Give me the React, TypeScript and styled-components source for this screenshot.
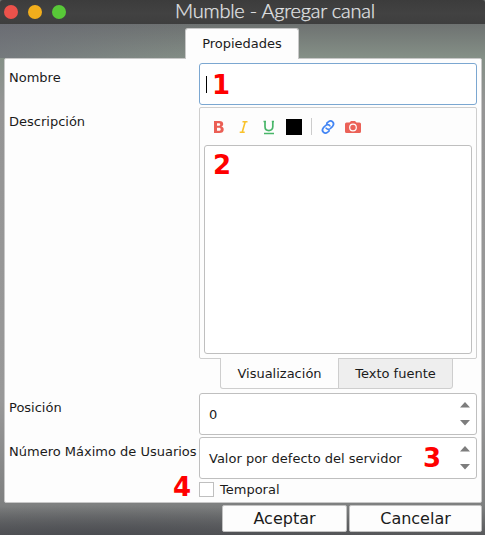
import React from "react";
import styled, { createGlobalStyle } from "styled-components";

const Global = createGlobalStyle`
  *{box-sizing:border-box}
  body{margin:0;overflow:hidden}
`;
const Window = styled.div`
  width:485px;height:535px;display:flex;flex-direction:column;
  font:13px/16px "DejaVu Sans",sans-serif;color:#1b1b1b;
  background:
    linear-gradient(90deg,rgba(104,104,117,.55),transparent 45%) 0 24px / 100% 34px no-repeat,
    radial-gradient(ellipse at 20% 100%,rgba(68,70,76,.65),transparent 65%) 0 503px / 100% 32px no-repeat,
    linear-gradient(#6e7271 24px,#859087 58px,#959595 105px,#999 400px,#828383 490px,#7e8080 505px,#58595b 535px);
`;
const TitleBar = styled.header`
  height:24px;flex:none;display:grid;grid-template-columns:175px 1fr;align-items:center;
  background:linear-gradient(#3c3c3c,#424242 55%,#3e3e3e);border-radius:3px 3px 0 0;
`;
const Lights = styled.div`display:flex;gap:10px;padding-left:4px;`;
const Light = styled.span<{ $color: string }>`
  width:14px;height:14px;border-radius:50%;background:${p => p.$color};
`;
const Title = styled.h1`
  margin:0;align-self:start;font:300 20px/20px Lato,sans-serif;letter-spacing:-.23px;
  color:#e4e6e8;-webkit-text-stroke:.25px #e4e6e8;white-space:nowrap;
`;
const TopTab = styled.div`
  flex:none;width:114px;height:31px;margin:4px 0 -1px 185px;z-index:1;
  display:flex;justify-content:center;padding-top:7px;
  background:#fdfdfd;border:1px solid #c8c8c8;border-bottom:0;border-radius:3px 3px 0 0;
`;
const Panel = styled.main`
  flex:none;width:478px;height:445px;margin-left:4px;padding:4px 4px 0;
  display:grid;grid-template-columns:190px 278px;grid-template-rows:42px 284px 42px 42px 16px;
  row-gap:2px;align-content:start;background:#fdfdfd;border:1px solid #c8c8c8;border-radius:2px;
`;
const Label = styled.label`padding:7px 0 0 0;white-space:nowrap;`;
const Field = styled.div<{ $focus?: boolean }>`
  position:relative;height:42px;display:flex;align-items:center;padding:1px 5px 0 9px;
  border:1px solid ${p => (p.$focus ? "#7ba7d1" : "#bfbfbf")};border-radius:3px;background:#fff;
`;
const Caret = styled.span`width:1px;height:17px;margin-left:-3px;background:#000;`;
const Mark = styled.b<{ $x: number; $y: number }>`
  position:absolute;left:${p => p.$x}px;top:${p => p.$y}px;font-size:26px;line-height:30px;color:#f00;
`;
const Editor = styled.section`
  height:252px;padding:0 4px 4px;display:flex;flex-direction:column;
  border:1px solid #cecece;border-radius:2px;
`;
const Toolbar = styled.div`height:37px;flex:none;display:flex;align-items:center;padding:0 0 0 5px;`;
const Tool = styled.span`width:25px;height:20px;flex:none;display:block;svg{display:block}`;
const Divider = styled.span`width:1px;height:17px;margin:0 6px 0 2px;background:#ccc;`;
const Text = styled.div`position:relative;flex:1;border:1px solid #bfbfbf;border-radius:3px;background:#fff;`;
const BottomTabs = styled.div`display:flex;height:31px;margin:-1px 0 0 21px;`;
const BottomTab = styled.div<{ $active?: boolean }>`
  width:${p => (p.$active ? 119 : 115)}px;margin-left:${p => (p.$active ? 0 : -1)}px;
  display:flex;justify-content:center;padding-top:${p => (p.$active ? 8 : 7)}px;
  border:1px solid #cecece;background:${p => (p.$active ? "#fdfdfd" : "#eee")};
  border-top:${p => (p.$active ? "0" : "1px solid #cecece")};
  border-radius:${p => (p.$active ? "0 0 0 3px" : "0 0 3px 0")};
`;
const Arrows = styled.svg`margin:0 0 2px auto;`;
const CheckRow = styled.div`position:relative;display:flex;align-items:center;gap:6px;padding-top:1px;`;
const Checkbox = styled.span`width:15px;height:15px;border:1px solid #bfbfbf;background:#fff;`;
const Actions = styled.footer`display:flex;gap:2px;margin:2px 0 0 222px;`;
const Button = styled.button<{ $width: number }>`
  width:${p => p.$width}px;height:27px;padding:0;border:1px solid #c2c2c2;border-radius:2px;
  background:#fdfdfd;color:#1b1b1b;font:16px/25px "DejaVu Sans",sans-serif;
`;

const Steppers = () => (
  <Arrows width="12" height="26" viewBox="0 0 12 26" fill="#7d7d7d">
    <path d="M1 6.5 6 1 11 6.5ZM1 19H11L6 24.5Z" />
  </Arrows>
);

const tools = [
  <path key="b" fillRule="evenodd" fill="#eb5f55" d="M5 4h5.3c2.7 0 3.9 1.2 3.9 3 0 1.4-.8 2.2-2 2.6 1.6.3 2.5 1.3 2.5 2.8 0 2.2-1.5 3.6-4.4 3.6H5Zm3 2.2v2.5h1.6c1 0 1.6-.4 1.6-1.3s-.6-1.2-1.6-1.2Zm0 4.6v3h1.9c1.2 0 1.8-.5 1.8-1.5s-.6-1.5-1.8-1.5Z" />,
  <path key="i" fill="none" stroke="#f9c22b" strokeWidth="1.6" d="M8.5 4.7h5M5.7 15.3h5M11.2 4.7 8.2 15.3" />,
  <path key="u" fill="none" stroke="#48b669" strokeWidth="1.7" d="M6 4.5v5.3c0 5 7.8 5 7.8 0V4.5M4.5 4.5H7M12.8 4.5h2.2M5 16.5h10" />,
  <path key="c" d="M2 2h16v16H2z" />,
];

export default function App() {
  return (
    <Window>
      <Global />
      <TitleBar>
        <Lights>
          <Light $color="#ec524b" /><Light $color="#f2ae1c" /><Light $color="#58c838" />
        </Lights>
        <Title>Mumble - Agregar canal</Title>
      </TitleBar>
      <TopTab>Propiedades</TopTab>
      <Panel>
        <Label>Nombre</Label>
        <Field $focus><Caret /><Mark $x={12} $y={6}>1</Mark></Field>
        <Label>Descripción</Label>
        <div>
          <Editor>
            <Toolbar>
              {tools.map((shape, i) => (
                <Tool key={i}><svg width="20" height="20">{shape}</svg></Tool>
              ))}
              <Divider />
              <Tool>
                <svg width="20" height="20" fill="none" stroke="#4285f4" strokeWidth="1.7" strokeLinecap="round">
                  <path d="m8.8 6.2 1.5-1.3c3.2-2.6 7 1.2 4.3 4.4l-2.2 2.2c-1.3 1.2-3.3 1.1-4.3-.4M11.2 13.8l-1.5 1.3c-3.2 2.6-7-1.2-4.3-4.4l2.2-2.2c1.3-1.2 3.3-1.1 4.3.4" />
                </svg>
              </Tool>
              <Tool>
                <svg width="20" height="20">
                  <path fill="#eb6258" d="M3.5 5.5h3L8 4h4l1.5 1.5h3q1.5 0 1.5 1.5v7.5q0 1.5-1.5 1.5h-13Q2 16 2 14.5V7q0-1.5 1.5-1.5Z" />
                  <circle cx="10" cy="10.5" r="3.3" fill="none" stroke="#fff" strokeWidth="1.2" />
                </svg>
              </Tool>
            </Toolbar>
            <Text><Mark $x={8} $y={4}>2</Mark></Text>
          </Editor>
          <BottomTabs>
            <BottomTab $active>Visualización</BottomTab>
            <BottomTab>Texto fuente</BottomTab>
          </BottomTabs>
        </div>
        <Label>Posición</Label>
        <Field>0<Steppers /></Field>
        <Label>Número Máximo de Usuarios</Label>
        <Field>Valor por defecto del servidor<Steppers /><Mark $x={223} $y={5}>3</Mark></Field>
        <span />
        <CheckRow><Mark $x={-26} $y={-9}>4</Mark><Checkbox />Temporal</CheckRow>
      </Panel>
      <Actions>
        <Button $width={125}>Aceptar</Button>
        <Button $width={133}>Cancelar</Button>
      </Actions>
    </Window>
  );
}
